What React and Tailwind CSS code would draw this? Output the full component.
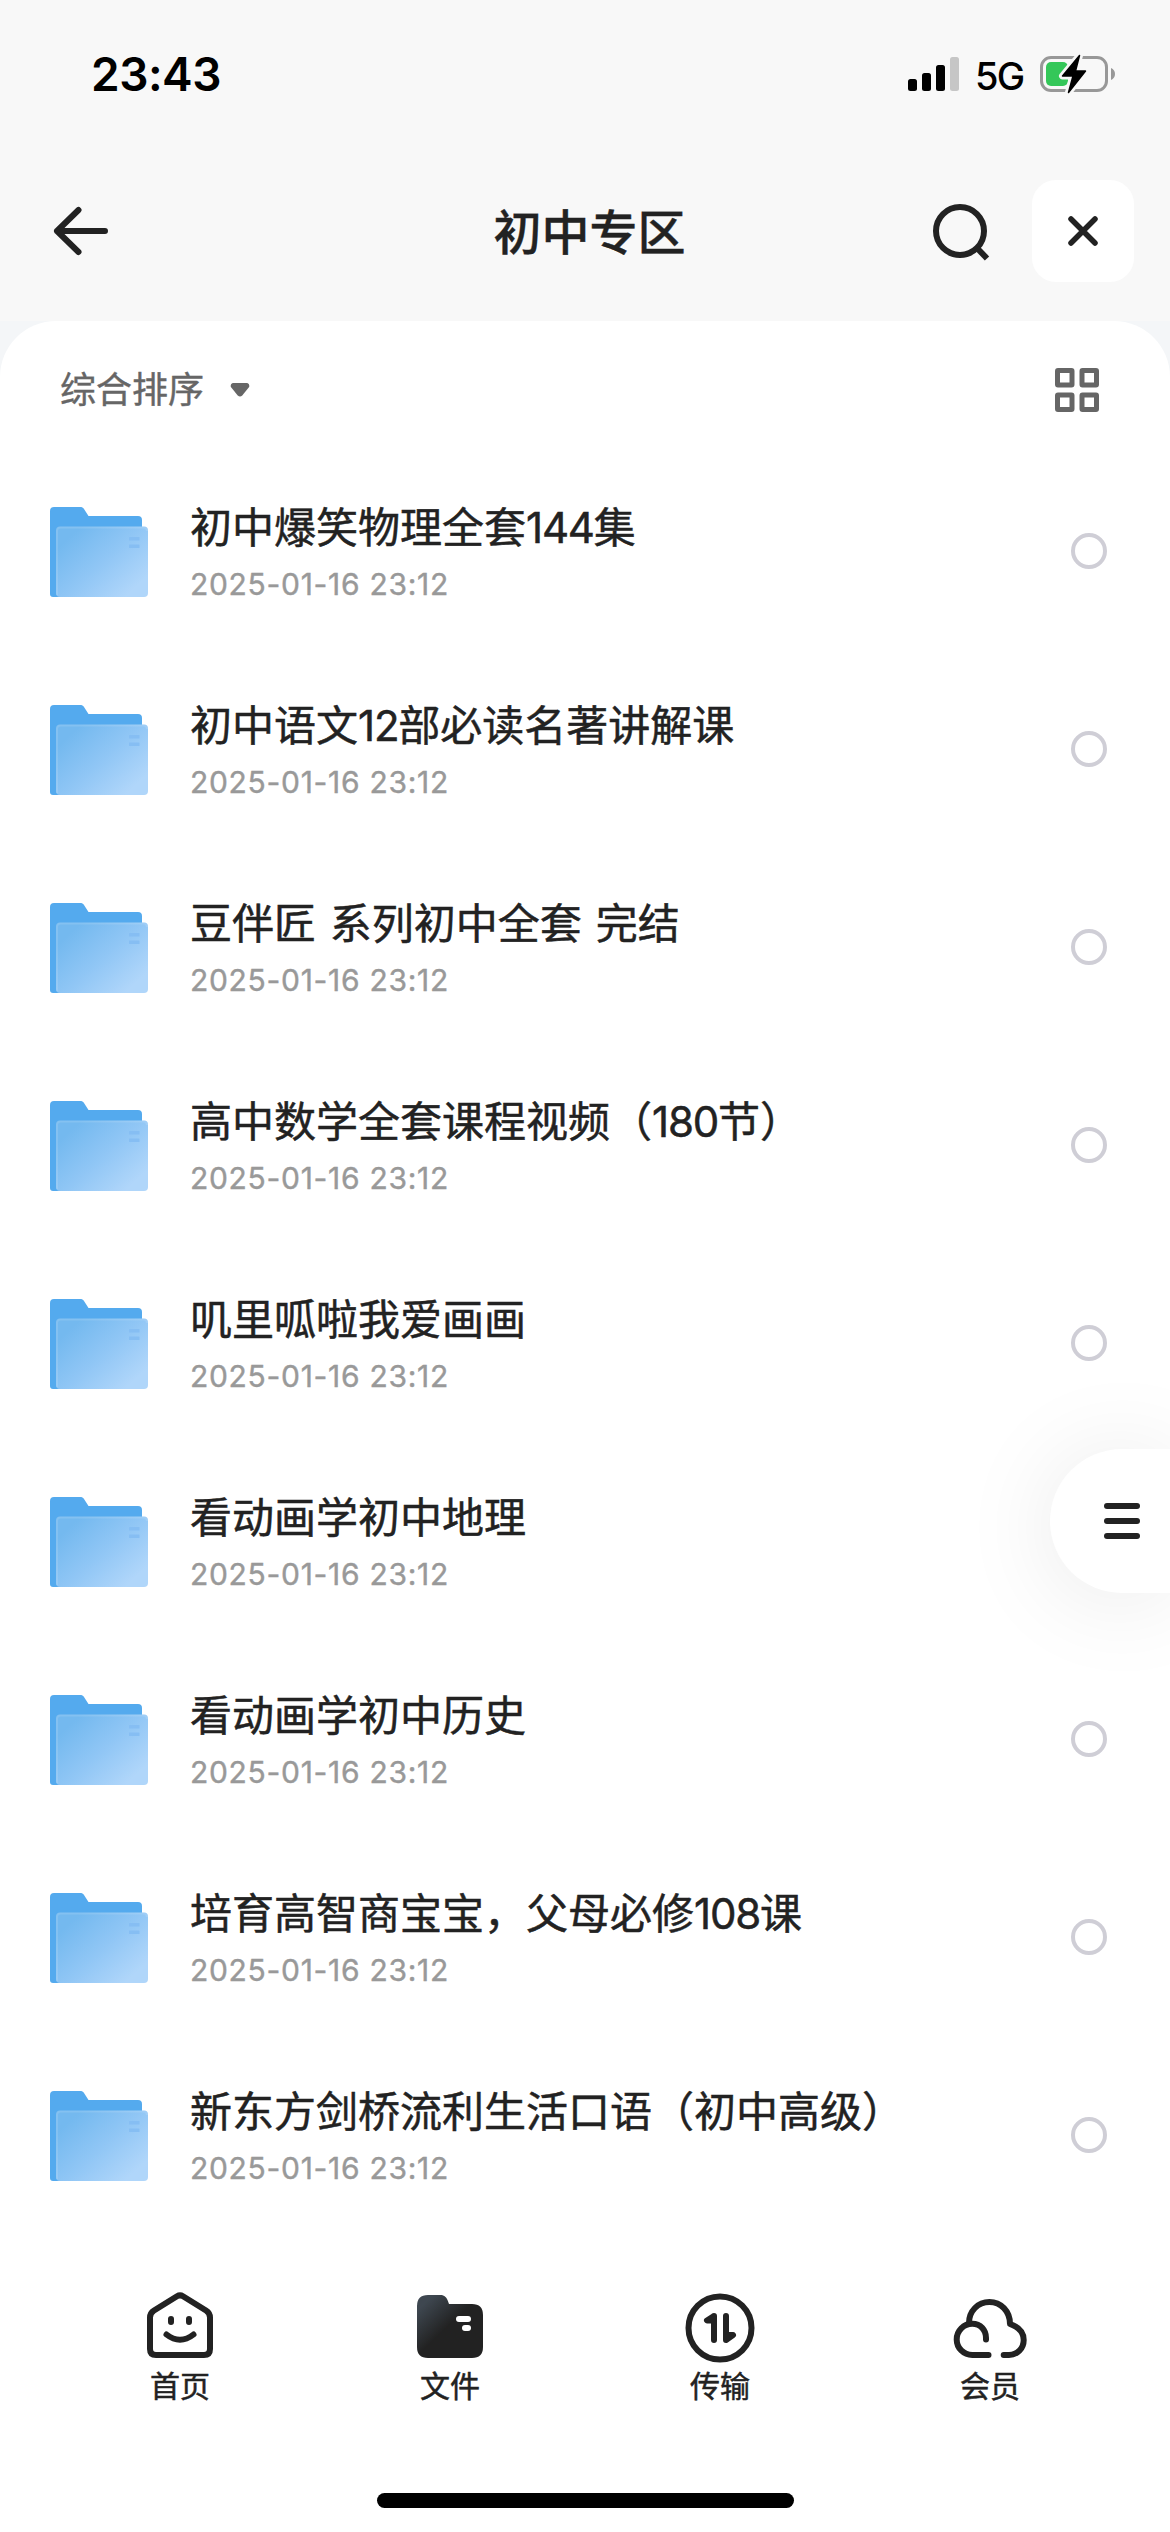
import React from 'react';

const files = [
  { name: '初中爆笑物理全套144集', date: '2025-01-16 23:12' },
  { name: '初中语文12部必读名著讲解课', date: '2025-01-16 23:12' },
  { name: '豆伴匠 系列初中全套 完结', date: '2025-01-16 23:12' },
  { name: '高中数学全套课程视频（180节）', date: '2025-01-16 23:12' },
  { name: '叽里呱啦我爱画画', date: '2025-01-16 23:12' },
  { name: '看动画学初中地理', date: '2025-01-16 23:12' },
  { name: '看动画学初中历史', date: '2025-01-16 23:12' },
  { name: '培育高智商宝宝，父母必修108课', date: '2025-01-16 23:12' },
  { name: '新东方剑桥流利生活口语（初中高级）', date: '2025-01-16 23:12' },
];

const StatusBar = () => (
  <div className="flex h-[150px] items-start justify-between pl-[91px] pr-[54px] pt-[54px] text-black">
    <span className="text-[46px] font-semibold leading-[40px] tracking-[-0.5px]">23:43</span>
    <div className="flex h-[40px] items-center">
      <svg className="h-[34px] w-[51px]" viewBox="0 0 51 34">
        <rect x="0" y="22" width="9" height="12" rx="2.5" />
        <rect x="14" y="16" width="9" height="18" rx="2.5" />
        <rect x="28" y="8" width="9" height="26" rx="2.5" />
        <rect x="42" y="0" width="9" height="34" rx="2.5" fill="#c6c6c6" />
      </svg>
      <span className="ml-[16px] mt-[3px] w-[51px] text-[38px] font-medium leading-[40px] tracking-[-1.8px]">5G</span>
      <svg className="ml-[14px] h-[40px] w-[76px]" viewBox="0 0 76 40">
        <rect x="1.5" y="3.5" width="65" height="33" rx="9.5" fill="none" stroke="#989898" strokeWidth="3" />
        <path d="M71 14c2.600 1 4 3.400 4 6s-1.400 5-4 6z" fill="#989898" />
        <rect x="6" y="8" width="22" height="24" rx="5" fill="#34c759" />
        <path d="M39.500 1.500 22.500 22h10.500L28.500 38.500 45.500 17H35.500z" stroke="#f8f8f8" strokeWidth="7" strokeLinejoin="round" fill="#f8f8f8" />
        <path d="M39.500 1.500 22.500 22h10.500L28.500 38.500 45.500 17H35.500z" stroke="#000" strokeWidth="1.500" strokeLinejoin="round" />
      </svg>
    </div>
  </div>
);

const Header = () => (
  <div className="flex h-[162px] items-center justify-between pl-[51px] pr-[36px] text-[#222]">
    <svg className="h-[60px] w-[60px]" viewBox="0 0 60 60" fill="none" stroke="currentColor" strokeWidth="6" strokeLinecap="round" strokeLinejoin="round">
      <path d="M54 30H6M27.500 9 6 30l21.500 21" />
    </svg>
    <h1 className="ml-[138px] mt-[3px] grow text-center text-[48px] font-medium leading-[60px] [-webkit-text-stroke:0.4px_#222]">初中专区</h1>
    <div className="flex items-center gap-[39px]">
      <svg className="h-[66px] w-[63px]" viewBox="0 0 63 66" fill="none" stroke="currentColor" strokeWidth="6">
        <circle cx="30" cy="33" r="24" />
        <path d="m47 50 10 10.500" />
      </svg>
      <button className="flex h-[102px] w-[102px] items-center justify-center rounded-[24px] bg-white">
        <svg className="h-[30px] w-[30px]" viewBox="0 0 30 30" fill="none" stroke="currentColor" strokeWidth="5.500" strokeLinecap="round">
          <path d="m3 3 24 24M27 3 3 27" />
        </svg>
      </button>
    </div>
  </div>
);

const FolderIcon = () => (
  <svg className="mt-[2px] h-[90px] w-[98px]" viewBox="0 0 98 90">
    <defs>
      <linearGradient id="front" x1="20" y1="30" x2="75" y2="90" gradientUnits="userSpaceOnUse">
        <stop offset="0" stopColor="#74b9ef" />
        <stop offset="0.500" stopColor="#90c6f5" />
        <stop offset="1" stopColor="#b0d6fa" />
      </linearGradient>
    </defs>
    <path d="M0 4a4 4 0 0 1 4-4h26c2 0 3 .6 4 2l4.500 7H88a4 4 0 0 1 4 4v20L20 90H3a3 3 0 0 1-3-3z" fill="#54aaee" />
    <rect x="6" y="19.500" width="92" height="70.500" rx="4" fill="url(#front)" />
    <path d="M7 88V24q0-3.500 3.500-3.500H94q3 0 3 3.500" fill="none" stroke="#fff" strokeOpacity="0.120" strokeWidth="2" />
    <rect x="79" y="30" width="10.500" height="3.500" rx="0.500" fill="#86bef3" />
    <rect x="79" y="37.500" width="10.500" height="3.500" rx="0.500" fill="#86bef3" />
  </svg>
);

// digits sit a little tighter than the Chinese text around them
const FileName = ({ name }) => (
  <p className="text-[42px] leading-[60px] text-[#222] [word-spacing:2px] [-webkit-text-stroke:0.5px_#222]">
    {name.split(/(\d+)/).map((part, i) => (
      <span key={i} className={i % 2 ? 'tracking-[-1.2px]' : ''}>{part}</span>
    ))}
  </p>
);

const FileRow = ({ file }) => (
  <li className="flex h-[198px] items-center pl-[50px] pr-[63px]">
    <FolderIcon />
    <div className="ml-[42px] grow">
      <FileName name={file.name} />
      <p className="mt-[6px] text-[30px] leading-[40px] tracking-[0.7px] text-[#999] [-webkit-text-stroke:0.4px_#999]">{file.date}</p>
    </div>
    <span className="h-[36px] w-[36px] rounded-full border-4 border-[#cfced6]" />
  </li>
);

const HomeIcon = () => (
  <svg className="h-[72px] w-[72px]" viewBox="0 0 72 72" fill="none" stroke="#222" strokeWidth="6" strokeLinecap="round" strokeLinejoin="round">
    <path d="M33 7.300q3-1.800 6 0L62 21.500q4 2.500 4 7V60q0 6-6 6H12q-6 0-6-6V28.500q0-4.500 4-7z" />
    <path d="M27 30v3M45 30v3M22.500 45.500Q36 56 49.500 45.500" />
  </svg>
);

const FilesIcon = () => (
  <svg className="h-[72px] w-[72px]" viewBox="0 0 72 72">
    <defs>
      <linearGradient id="tab" x1="8" y1="12" x2="33" y2="38" gradientUnits="userSpaceOnUse">
        <stop offset="0.100" stopColor="#3e4750" />
        <stop offset="1" stopColor="#222" />
      </linearGradient>
    </defs>
    <path d="M3 17Q3 6 14 6h12c4 0 6 1.500 7.500 5l1.500 4h23q11 0 11 11v32q0 11-11 11H14Q3 69 3 58z" fill="url(#tab)" />
    <rect x="42" y="27" width="15" height="6" rx="3" fill="#fff" />
    <rect x="48" y="36" width="9" height="6" rx="3" fill="#fff" />
  </svg>
);

const TransferIcon = () => (
  <svg className="h-[72px] w-[72px] overflow-visible" viewBox="0 0 72 72" fill="none" stroke="#222" strokeWidth="6" strokeLinecap="round" strokeLinejoin="round">
    <circle cx="36" cy="39" r="31.500" />
    <path d="M30 27v24M30 27l-7 4.500h7zM42 27v24M42 51l7-5h-7z" />
  </svg>
);

const MemberIcon = () => (
  <svg className="h-[72px] w-[78px]" viewBox="0 0 78 72" fill="none" stroke="#222" strokeWidth="6" strokeLinecap="round" strokeLinejoin="round">
    <path d="M37.500 66H21.300a15.600 15.600 0 0 1 0-31.200C29.500 34.800 35 41 35 49v1.500" />
    <path d="M18 34C18 22 27 13 38.400 13S59 22 59 35C67.500 38 72.700 43.500 72.700 51c0 8.500-6.500 15-14.700 15h-5.300" />
  </svg>
);

const tabs = [
  { label: '首页', Icon: HomeIcon },
  { label: '文件', Icon: FilesIcon },
  { label: '传输', Icon: TransferIcon },
  { label: '会员', Icon: MemberIcon },
];

export default function App() {
  return (
    <div className="relative flex h-[2532px] w-[1170px] flex-col overflow-hidden bg-[#f8f8f8] font-['Inter','Noto_Sans_CJK_SC',sans-serif]">
      <StatusBar />
      <Header />
      <div className="mt-[9px] grow bg-[#f4f6f8]">
        <main className="flex h-full flex-col rounded-t-[56px] bg-white">
          <div className="flex h-[131px] items-center justify-between pl-[60px] pr-[71px] pt-[7px]">
            <div className="flex items-center text-[36px] leading-[48px] text-[#666] [-webkit-text-stroke:0.4px_#666]">
              综合排序
              <svg className="ml-[26px] h-[14px] w-[20px]" viewBox="0 0 22 14" fill="#666" preserveAspectRatio="none">
                <path d="M3 0h16q3 1 2 4l-7.500 8.500q-2.500 2-5 0L1 4Q0 1 3 0z" />
              </svg>
            </div>
            <svg className="h-[44px] w-[44px]" viewBox="0 0 44 44" fill="none" stroke="#666" strokeWidth="5">
              <rect x="2.500" y="2.500" width="14.500" height="14.500" rx="0.500" />
              <rect x="27" y="2.500" width="14.500" height="14.500" rx="0.500" />
              <rect x="2.500" y="27" width="14.500" height="14.500" rx="0.500" />
              <rect x="27" y="27" width="14.500" height="14.500" rx="0.500" />
            </svg>
          </div>
          <ul>
            {files.map((file) => (
              <FileRow key={file.name} file={file} />
            ))}
          </ul>
          <nav className="mt-[55px] grid grid-cols-4 px-[45px]">
            {tabs.map(({ label, Icon }) => (
              <div key={label} className="flex flex-col items-center">
                <Icon />
                <span className="mt-[5px] text-[30px] leading-[40px] text-[#222] [-webkit-text-stroke:0.5px_#222]">{label}</span>
              </div>
            ))}
          </nav>
          <div className="mx-auto mb-[24px] mt-auto h-[15px] w-[417px] rounded-full bg-black" />
        </main>
      </div>

      {/* floating menu */}
      <button className="absolute right-0 top-[1449px] flex h-[144px] w-[120px] flex-col items-start justify-center gap-[9px] rounded-l-full bg-white pl-[54px] shadow-[0_6px_100px_rgba(0,0,0,0.09)]">
        <span className="h-[6px] w-[36px] rounded-full bg-[#222]" />
        <span className="h-[6px] w-[36px] rounded-full bg-[#222]" />
        <span className="h-[6px] w-[36px] rounded-full bg-[#222]" />
      </button>
    </div>
  );
}
